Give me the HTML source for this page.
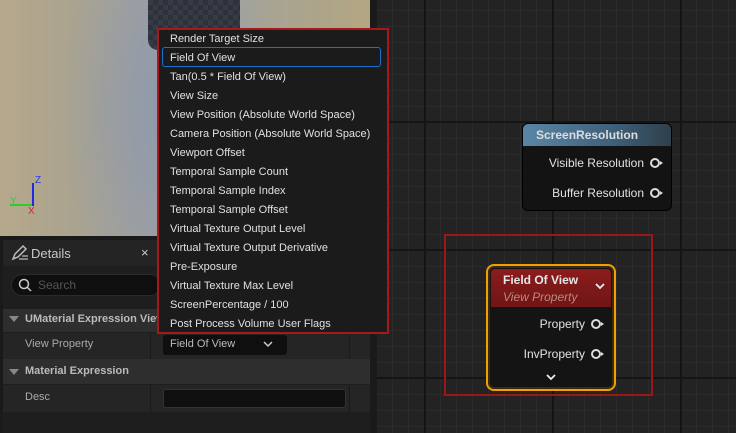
<!DOCTYPE html>
<html><head><style>
*{margin:0;padding:0;box-sizing:border-box}
body{width:736px;height:433px;overflow:hidden;background:#1a1a1a;font-family:"Liberation Sans",sans-serif;position:relative;color:#c8c8c8}
.abs{position:absolute}
#graph{left:377px;top:0;width:359px;height:433px;background-color:#232323;
background-image:
linear-gradient(90deg,#141414 2px,transparent 2px),
linear-gradient(0deg,#141414 2px,transparent 2px),
linear-gradient(90deg,#2b2b2b 1px,transparent 1px),
linear-gradient(0deg,#2b2b2b 1px,transparent 1px);
background-size:128px 128px,128px 128px,16px 16px,16px 16px;
background-position:47px 0,0 123px,47px 0,0 11px}
#vp{left:0;top:0;width:370px;height:236px;
background:
radial-gradient(ellipse 110px 220px at 170px 110px,rgba(140,152,175,.9),rgba(140,152,175,0) 100%),
linear-gradient(90deg,#b6a98b 0,#aaa38f 20%,#a2a29d 40%,#a4a49e 60%,#aca48a 85%,#b4a684 100%);}
#menu{left:157px;top:28px;width:232px;height:306px;border:2px solid #a81818;background:#1b1b1b}
#menu div{position:absolute;left:11px;font-size:11px;color:#e0e0e0;white-space:nowrap}
#sel{left:162px;top:47px;width:219px;height:20px;border:1.5px solid #1f6fd0;border-radius:3px}
#det{left:3px;top:240px;width:367px;height:193px;background:#1e1e1e}
.node{position:absolute;border-radius:6px}
.pin{display:inline-block;width:10px;height:10px;border:2px solid #ddd;border-radius:50%;vertical-align:-1px;margin-left:6px;margin-right:3px;position:relative}
.pin:after{content:"";position:absolute;right:-5px;top:1px;border-left:3px solid #ddd;border-top:2px solid transparent;border-bottom:2px solid transparent}
.lab{position:absolute;font-size:12px;color:#e2e2e2;text-align:right;white-space:nowrap}
</style></head><body>
<div id="graph" class="abs"></div>
<div id="vp" class="abs">
 <div class="abs" style="left:148px;top:0;width:92px;height:50px;background:repeating-conic-gradient(#2c313b 0 25%,#363b46 0 50%) 0 0/10px 10px;border-radius:0 0 10px 10px"></div>
 <div class="abs" style="left:32px;top:183px;width:2px;height:23px;background:#1a2de0"></div>
 <div class="abs" style="left:35px;top:175px;font-size:10px;color:#2838e8">Z</div>
 <div class="abs" style="left:10px;top:204px;width:22px;height:2px;background:#2ad02a"></div>
 <div class="abs" style="left:10px;top:196px;font-size:10px;color:#2ad02a">Y</div>
 <div class="abs" style="left:28px;top:206px;font-size:10px;color:#e02020">X</div>
</div>
<div id="det" class="abs">
 <div class="abs" style="left:0;top:0;width:367px;height:26px;background:#242424"></div>
 <svg class="abs" style="left:8px;top:5px" width="18" height="16"><path d="M2 14 L4 9 L12 1 L15 4 L7 12 Z" fill="none" stroke="#bbb" stroke-width="1.5"/><path d="M8 14h9M11 11h6" stroke="#bbb" stroke-width="1.2"/></svg>
 <div class="abs" style="left:28px;top:6px;font-size:13px;color:#c8c8c8">Details</div>
 <div class="abs" style="left:138px;top:5px;font-size:13px;color:#ccc">×</div>
 <div class="abs" style="left:8px;top:34px;width:150px;height:22px;background:#0f0f0f;border-radius:11px;border:1px solid #2a2a2a"></div>
 <svg class="abs" style="left:15px;top:38px" width="14" height="14"><circle cx="6" cy="6" r="4.5" fill="none" stroke="#ccc" stroke-width="1.5"/><path d="M9 9l4 4" stroke="#ccc" stroke-width="1.5"/></svg>
 <div class="abs" style="left:35px;top:38px;font-size:12px;color:#555">Search</div>
 <div class="abs" style="left:0;top:69px;width:367px;height:23px;background:#2e2e2e"></div>
 <div class="abs" style="left:6px;top:76px;border-top:6px solid #888;border-left:5px solid transparent;border-right:5px solid transparent"></div>
 <div class="abs" style="left:22px;top:73px;font-size:11px;font-weight:bold;color:#bbb">UMaterial Expression View</div>
 <div class="abs" style="left:0;top:93px;width:367px;height:35px;background:#252525"></div>
 <div class="abs" style="left:147px;top:93px;width:1px;height:35px;background:#1a1a1a"></div>
 <div class="abs" style="left:346px;top:93px;width:1px;height:35px;background:#1a1a1a"></div>
 <div class="abs" style="left:22px;top:98px;font-size:11px;color:#aaa">View Property</div>
 <div class="abs" style="left:160px;top:95px;width:124px;height:20px;background:#0f0f0f;border-radius:3px"></div>
 <div class="abs" style="left:167px;top:98px;font-size:11px;color:#bbb">Field Of View</div>
 <svg class="abs" style="left:260px;top:101px" width="10" height="7"><path d="M1 1l4 4 4-4" fill="none" stroke="#ccc" stroke-width="1.5"/></svg>
 <div class="abs" style="left:0;top:119px;width:367px;height:25px;background:#2e2e2e"></div>
 <div class="abs" style="left:6px;top:129px;border-top:6px solid #888;border-left:5px solid transparent;border-right:5px solid transparent"></div>
 <div class="abs" style="left:22px;top:125px;font-size:11px;font-weight:bold;color:#bbb">Material Expression</div>
 <div class="abs" style="left:0;top:145px;width:367px;height:27px;background:#252525"></div>
 <div class="abs" style="left:147px;top:145px;width:1px;height:27px;background:#1a1a1a"></div>
 <div class="abs" style="left:346px;top:145px;width:1px;height:27px;background:#1a1a1a"></div>
 <div class="abs" style="left:22px;top:151px;font-size:11px;color:#aaa">Desc</div>
 <div class="abs" style="left:160px;top:149px;width:183px;height:19px;background:#0f0f0f;border:1px solid #333;border-radius:3px"></div>
</div>
<div id="menu" class="abs">
<div style="top:3px">Render Target Size</div>
<div style="top:22px">Field Of View</div>
<div style="top:41px">Tan(0.5 * Field Of View)</div>
<div style="top:60px">View Size</div>
<div style="top:79px">View Position (Absolute World Space)</div>
<div style="top:98px">Camera Position (Absolute World Space)</div>
<div style="top:117px">Viewport Offset</div>
<div style="top:136px">Temporal Sample Count</div>
<div style="top:155px">Temporal Sample Index</div>
<div style="top:174px">Temporal Sample Offset</div>
<div style="top:193px">Virtual Texture Output Level</div>
<div style="top:212px">Virtual Texture Output Derivative</div>
<div style="top:231px">Pre-Exposure</div>
<div style="top:250px">Virtual Texture Max Level</div>
<div style="top:269px">ScreenPercentage / 100</div>
<div style="top:288px">Post Process Volume User Flags</div>
</div>
<div id="sel" class="abs"></div>
<div class="node" style="left:522px;top:123px;width:150px;height:88px;background:#131313;border:1px solid #000;overflow:hidden">
 <div class="abs" style="left:0;top:0;width:150px;height:22px;background:linear-gradient(90deg,#5a86a6,#3e607a 60%,#2e3e4a)"></div>
 <div class="abs" style="left:13px;top:4px;font-size:12px;font-weight:bold;color:#ddd">ScreenResolution</div>
 <div class="lab" style="right:8px;top:32px">Visible Resolution<span class="pin"></span></div>
 <div class="lab" style="right:8px;top:62px">Buffer Resolution<span class="pin"></span></div>
</div>
<div class="abs" style="left:444px;top:234px;width:209px;height:162px;border:2px solid #9a1818"></div>
<div class="node" style="left:486px;top:264px;width:130px;height:127px;border:2px solid #f0a000;background:#141414;border-radius:8px;box-shadow:inset 0 0 0 2px #3a2a10;overflow:hidden">
 <div class="abs" style="left:3px;top:3px;width:120px;height:38px;background:linear-gradient(180deg,#8c1c1c,#701515);border-radius:4px 4px 0 0"></div>
 <div class="abs" style="left:15px;top:7px;font-size:12px;font-weight:bold;color:#e6e6e6">Field Of View</div>
 <div class="abs" style="left:15px;top:24px;font-size:12px;font-style:italic;color:#b88a80">View Property</div>
 <svg class="abs" style="left:107px;top:17px" width="10" height="7"><path d="M1 1l4 4 4-4" fill="none" stroke="#eee" stroke-width="1.8"/></svg>
 <div class="lab" style="right:10px;top:51px">Property<span class="pin"></span></div>
 <div class="lab" style="right:10px;top:81px">InvProperty<span class="pin"></span></div>
 <svg class="abs" style="left:58px;top:108px" width="10" height="7"><path d="M1 1l4 4 4-4" fill="none" stroke="#eee" stroke-width="1.8"/></svg>
</div>
</body></html>
